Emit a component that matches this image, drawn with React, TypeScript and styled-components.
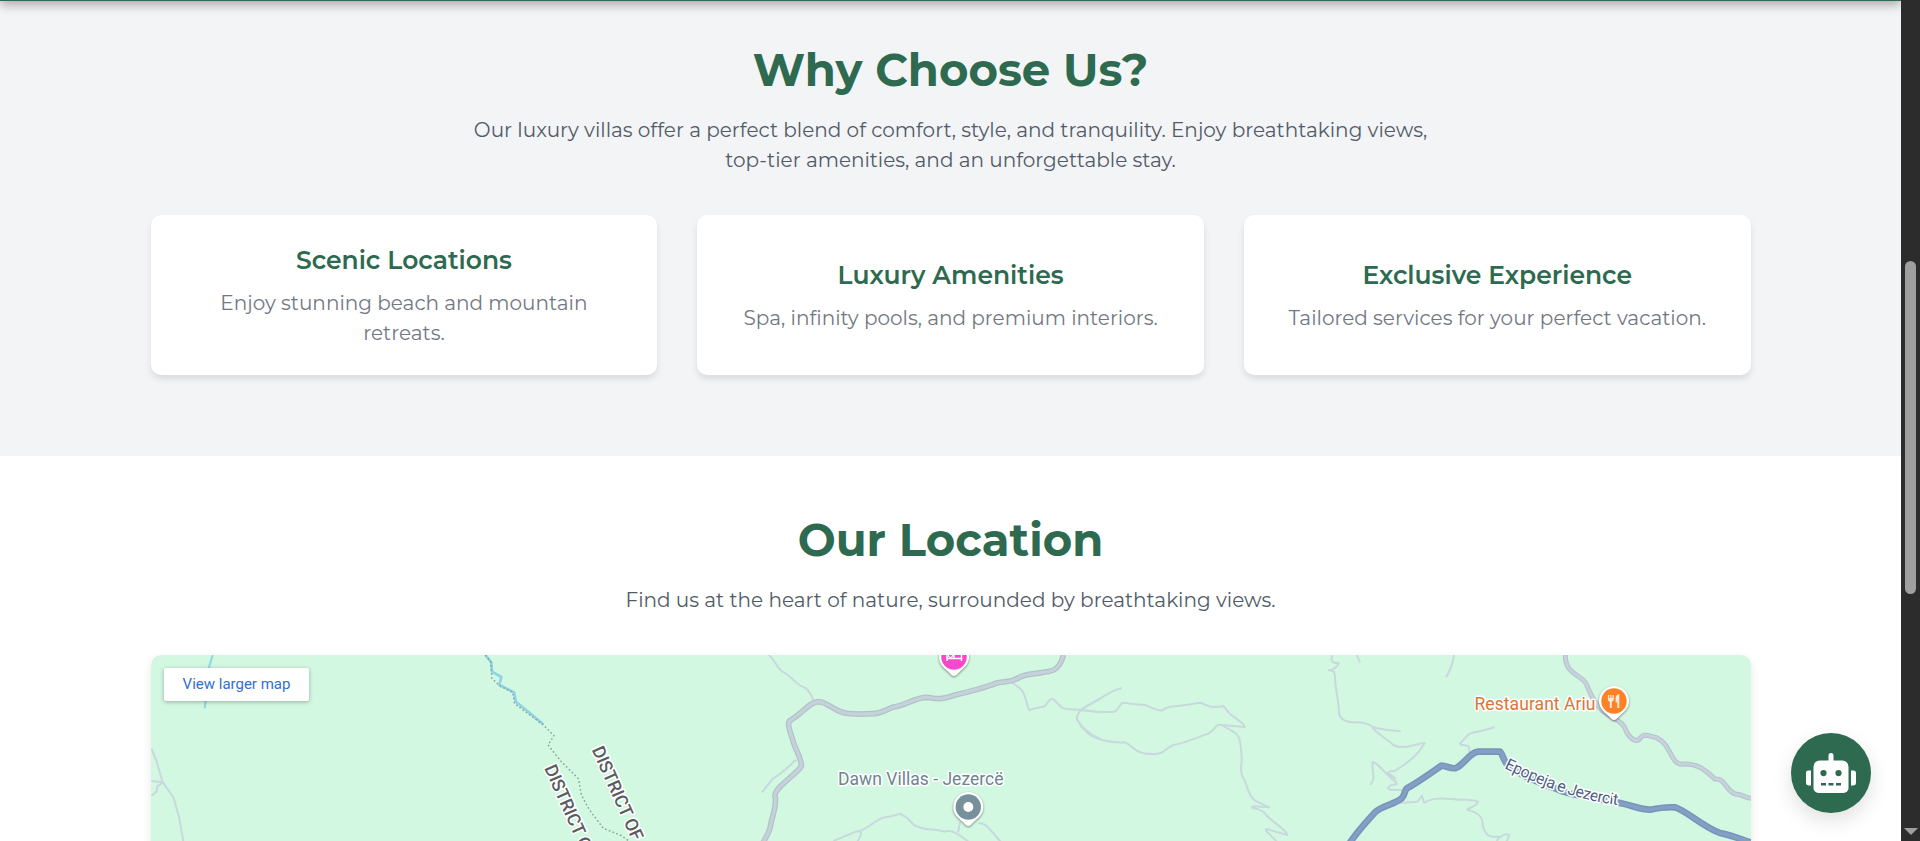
import React from 'react';
import styled, { createGlobalStyle } from 'styled-components';
import { FaRobot } from 'react-icons/fa';

const GlobalStyle = createGlobalStyle`
  *, *::before, *::after { box-sizing: border-box; }
  html, body { margin: 0; height: 841px; overflow: hidden; background: #fff; }
  body { font-family: Montserrat, "Open Sans", sans-serif; font-size: 20px; line-height: 30px; }
`;

const Window = styled.div`
  display: flex;
  height: 841px;
  overflow: hidden;
`;

const Viewport = styled.main`
  position: relative;
  display: flex;
  flex-direction: column;
  flex: 1;
  min-width: 0;
  overflow: hidden;
`;

const Header = styled.header`
  position: relative;
  z-index: 2;
  flex: none;
  height: 70px;
  margin-top: -69px;
  background: #2d6a4f;
  box-shadow: 0 4px 10px rgba(0, 0, 0, 0.3);
`;

const Section = styled.section<{ $tone: string; $top: number; $bottom: number }>`
  display: flex;
  flex-direction: column;
  align-items: center;
  flex: none;
  padding: ${(p) => p.$top}px 0 ${(p) => p.$bottom}px;
  background: ${(p) => p.$tone};
`;

const Title = styled.h2`
  margin: 0 0 12px;
  color: #2d6a4f;
  font-size: 45px;
  font-weight: 700;
  line-height: 67px;
`;

const Lead = styled.p`
  max-width: 1000px;
  margin: 0 0 40px;
  color: #515b68;
  text-align: center;
`;

const Cards = styled.div`
  display: grid;
  grid-template-columns: repeat(3, 1fr);
  gap: 40px;
  width: 1600px;
  margin-left: 0.2px;
`;

const Card = styled.article`
  display: flex;
  flex-direction: column;
  justify-content: center;
  height: 160px;
  padding: 0 30px;
  border-radius: 10px;
  background: #fff;
  box-shadow: 0 4px 6px rgba(0, 0, 0, 0.1);
  text-align: center;
`;

const CardTitle = styled.h3`
  margin: 0 0 9px;
  color: #2d6a4f;
  font-size: 25px;
  font-weight: 600;
  line-height: 37px;
`;

const CardText = styled.p`
  margin: 0;
  color: #727883;
`;

const MapShadow = styled.div`
  margin-left: 1px;
  border-radius: 10px;
  box-shadow: 0 4px 10px rgba(0, 0, 0, 0.1);
`;

const MapFrame = styled.div`
  position: relative;
  width: 1600px;
  height: 450px;
  border-radius: 10px;
  overflow: hidden;
  background: #d2f8e1;
`;

const MapDrawing = styled.svg`
  display: block;
  width: 1600px;
  height: 450px;
`;

const LargerMap = styled.a`
  position: absolute;
  top: 13px;
  left: 13px;
  display: flex;
  align-items: center;
  justify-content: center;
  width: 145px;
  height: 33px;
  border-radius: 2px;
  background: #fff;
  box-shadow: 0 1px 4px rgba(0, 0, 0, 0.3);
  color: #2f71d0;
  font: 400 15px/33px Roboto, sans-serif;
`;

const Place = styled.text<{ $ink: string; $weight?: number; $size?: number }>`
  fill: ${(p) => p.$ink};
  stroke: #fff;
  stroke-width: 3px;
  stroke-linejoin: round;
  paint-order: stroke;
  font-family: Roboto, sans-serif;
  font-size: ${(p) => p.$size ?? 17}px;
  font-weight: ${(p) => p.$weight ?? 400};
`;

const Trail = styled.path`
  fill: none;
  stroke: #c8d9dd;
  stroke-width: 6;
  stroke-linejoin: round;
`;

const Line = styled.path<{ $ink: string; $w: number; $dash?: string }>`
  fill: none;
  stroke: ${(p) => p.$ink};
  stroke-width: ${(p) => p.$w};
  stroke-dasharray: ${(p) => p.$dash ?? 'none'};
  stroke-linejoin: round;
`;

const PinShape = styled.path`
  fill: #fff;
  filter: drop-shadow(0 1px 1px rgba(0, 0, 0, 0.45));
`;

const ChatButton = styled.button`
  position: absolute;
  z-index: 3;
  right: 30px;
  bottom: 28px;
  display: flex;
  align-items: center;
  justify-content: center;
  width: 80px;
  height: 80px;
  padding: 0;
  border: 0;
  border-radius: 50%;
  background: #2d6a4f;
  color: #fff;
  box-shadow: 0 8px 20px rgba(0, 0, 0, 0.12);

  svg { width: 50px; height: 40px; }
`;

const ScrollTrack = styled.div`
  display: flex;
  flex-direction: column;
  align-items: center;
  justify-content: space-between;
  flex: none;
  width: 19px;
  padding: 261px 0 6px;
  background: #2c2c2c;
`;

const ScrollThumb = styled.div`
  width: 11px;
  height: 333px;
  border-radius: 6px;
  background: #9f9f9f;
`;

const ScrollArrow = styled.div`
  border: 7px solid transparent;
  border-top-color: #9f9f9f;
  border-bottom: 0;
`;

const highlights = [
  { title: 'Scenic Locations', text: 'Enjoy stunning beach and mountain retreats.' },
  { title: 'Luxury Amenities', text: 'Spa, infinity pools, and premium interiors.' },
  { title: 'Exclusive Experience', text: 'Tailored services for your perfect vacation.' },
];

const Road = ({ d, edge, fill, w }: { d: string; edge: string; fill: string; w: number }) => (
  <>
    <Line d={d} $ink={edge} $w={w} />
    <Line d={d} $ink={fill} $w={w * 0.55} />
  </>
);

const Pin = ({ x, y, color, children }: { x: number; y: number; color: string; children: React.ReactNode }) => (
  <g transform={`translate(${x} ${y})`}>
    <PinShape d="M0 -15C8.3 -15 15 -8.6 15 0C15 7 10.5 10.5 6 14.5L2.5 18Q0 20 -2.5 18L-6 14.5C-10.5 10.5 -15 7 -15 0C-15 -8.6 -8.3 -15 0 -15Z" />
    <circle r="12.7" fill={color} />
    {children}
  </g>
);

const LocationMap = () => (
  <MapDrawing viewBox="151 655 1600 450">
    <defs>
      <path id="epopeja" d="M1504 768C1530 781 1556 791 1578 797S1608 804 1650 809" />
    </defs>

    <g transform="translate(140 645) scale(.33333)">
      <Line d="M218 30L206 70L200 140L194 190" $ink="#93dbe3" $w={7} />
      <Line d="M1036 30L1054 52L1056 80L1084 96L1078 120L1122 142L1128 170L1210 238" $ink="#8ed3e6" $w={8} />
      <Line
        d="M1036 30L1052 50L1056 100L1078 122L1118 142L1124 176L1210 240L1242 272L1224 300L1262 348L1316 402L1324 450L1348 494L1390 550L1440 570L1470 590"
        $ink="#8aa39d"
        $w={4.5}
        $dash="5 7"
      />
      <Trail d="M34 310L50 350L68 412L100 456L118 520L130 590M34 408L68 412L52 424L50 440L34 452" />
    </g>

    <g transform="translate(640 645) scale(.33333)">
      <Trail d="M386 30C410 50 410 70 430 82C455 92 465 118 490 126C508 132 512 150 520 164M470 346L462 348C450 366 410 394 396 404L366 442" />
      <Trail d="M1118 116C1160 134 1152 160 1168 196C1190 184 1210 190 1216 182C1230 160 1236 158 1246 168C1265 190 1270 192 1290 193C1330 196 1350 194 1380 203M1380 162C1340 182 1312 194 1310 222C1320 240 1345 268 1380 282" />
      <Trail d="M580 588L648 560C662 556 668 562 660 575L652 590M660 558C690 545 710 524 730 518C756 514 766 512 780 506C805 518 808 524 820 538C850 560 890 550 912 560C935 554 948 562 985 590M954 562L960 532M1015 535C1040 530 1052 560 1082 590" />
      <Road
        d="M1270 30C1262 66 1244 80 1215 81C1186 88 1160 85 1136 98C1110 116 1085 106 1060 118C1015 134 980 142 945 150C900 165 895 162 862 157C825 157 800 180 760 186C730 198 725 205 700 206C650 209 620 208 602 200C575 190 555 170 535 170C505 172 490 205 448 228C440 240 455 270 460 292C470 322 485 340 484 364C468 390 405 426 405 452C412 490 396 510 392 540C390 560 378 575 370 592"
        edge="#b3c2ca"
        fill="#c5d2d9"
        w={17}
      />
    </g>

    <g transform="translate(1080 645) scale(.33333)">
      <Trail d="M126 130C100 130 60 165 0 194C30 198 50 204 104 200C120 194 115 172 134 173C150 178 180 178 195 180C220 190 235 200 248 196C265 180 280 186 300 182L362 173C385 186 400 190 430 183C445 200 450 210 465 218C485 232 495 240 494 246L426 240L414 240C400 250 400 258 385 266C340 282 310 295 280 300C250 315 250 328 220 327C160 328 160 300 135 292C90 294 80 288 60 283C20 270 20 258 0 240" />
      <Trail d="M426 240C450 258 475 260 480 288C484 320 486 330 485 350C480 380 485 395 494 405C505 440 512 460 530 470L568 487L520 484C505 490 540 490 552 502C570 528 622 555 622 570L560 552C550 556 575 570 590 590" />
      <Trail d="M758 30C748 48 760 56 776 54C772 66 764 74 746 76C760 76 766 80 765 100C765 130 775 150 778 210C785 226 805 233 825 232C855 232 868 238 880 246C910 256 930 256 962 259M876 246C885 262 920 280 940 300C970 316 1005 296 1034 294C1020 320 990 350 950 374C940 382 925 376 924 384L946 400C925 404 955 410 950 418C920 420 920 434 935 434L975 436M870 420C890 400 874 380 878 350C895 354 912 386 950 412" />
      <Trail d="M830 30L840 52M1122 30C1118 60 1110 75 1098 97M1243 246C1210 260 1185 258 1166 268L1140 296C1142 304 1158 296 1168 306L1168 325M960 474L1012 470L1026 452L1032 474C1060 455 1090 462 1118 462C1150 468 1170 460 1194 470C1190 485 1160 490 1162 494C1185 500 1210 510 1208 540C1215 570 1225 578 1260 575" />
    </g>

    <g transform="translate(1440 645) scale(.33333)">
      <Road
        d="M376 30C374 90 430 90 440 120C460 165 465 175 490 200C520 225 550 225 560 262C570 280 590 295 600 280C612 262 630 275 650 278C695 300 690 355 725 358C770 350 800 380 825 402C860 400 855 440 890 448C910 448 915 462 940 460"
        edge="#b6c3ce"
        fill="#c7d2dc"
        w={15}
      />
      <Trail d="M170 588C180 570 200 565 208 570L200 590" />
      <Road
        d="M-275 600C-245 555 -215 525 -195 502C-175 482 -140 480 -115 460C-100 445 -110 430 -92 426C-60 408 -15 375 5 362C20 362 35 375 50 368C75 355 90 322 115 320L180 320C190 330 188 345 205 362C260 405 320 418 370 440C420 455 470 460 540 474C580 482 600 494 630 494C660 488 690 486 705 487C745 500 780 540 840 564C880 572 900 582 940 595"
        edge="#7894bc"
        fill="#839fc3"
        w={20}
      />
    </g>

    <Place $ink="#5b5b61" $weight={500} $size={18} textLength={101} transform="translate(591.5 749.5) rotate(66)">
      DISTRICT OF
    </Place>
    <Place $ink="#5b5b61" $weight={500} $size={18} textLength={101} transform="translate(544 768) rotate(66)">
      DISTRICT OF
    </Place>
    <Place $ink="#6f8390" $size={17.5} x={838} y={785} textLength={165.5}>
      Dawn Villas - Jezercë
    </Place>
    <Place $ink="#dd7433" $size={17.5} x={1474.5} y={710} textLength={121}>
      Restaurant Ariu
    </Place>
    <Place $ink="#4f5f80" $size={16}>
      <textPath href="#epopeja" textLength={120}>
        Epopeja e Jezercit
      </textPath>
    </Place>

    <Pin x={954} y={657} color="#f548cb">
      <path d="M-7 -6V4M-7 1.5H7.5M7.5 4V-1Q7.5 -4 4.5 -4H0V1.5" fill="none" stroke="#fff" strokeWidth="1.5" />
      <circle cx="-3.5" cy="-1.5" r="2" fill="none" stroke="#fff" strokeWidth="1.2" />
    </Pin>
    <Pin x={968.3} y={807} color="#78909c">
      <circle r="5" fill="#fff" />
    </Pin>
    <Pin x={1614} y={701} color="#ff8126">
      <path d="M-5.5 -6V-2.5M-3.2 -6V-2.5M-.9 -6V-2.5" stroke="#ffe9d8" strokeWidth="1.2" />
      <path d="M-6.1 -3H-.3V-1.5Q-.5 .5 -2.2 .7V7H-4.2V.7Q-6 .5 -6.1 -1.5ZM5.3 -7V7H3.3V1.5H1.6V-3Q2 -6.5 5.3 -7Z" fill="#ffe9d8" />
    </Pin>
  </MapDrawing>
);

export default function App() {
  return (
    <Window>
      <GlobalStyle />
      <Viewport>
        <Header />
        <Section $tone="#f3f4f6" $top={35} $bottom={81}>
          <Title>Why Choose Us?</Title>
          <Lead>
            Our luxury villas offer a perfect blend of comfort, style, and tranquility. Enjoy breathtaking views,
            top-tier amenities, and an unforgettable stay.
          </Lead>
          <Cards>
            {highlights.map((item) => (
              <Card key={item.title}>
                <CardTitle>{item.title}</CardTitle>
                <CardText>{item.text}</CardText>
              </Card>
            ))}
          </Cards>
        </Section>
        <Section $tone="#fff" $top={50} $bottom={80}>
          <Title>Our Location</Title>
          <Lead>Find us at the heart of nature, surrounded by breathtaking views.</Lead>
          <MapShadow>
            <MapFrame>
              <LocationMap />
              <LargerMap>View larger map</LargerMap>
            </MapFrame>
          </MapShadow>
        </Section>
        <ChatButton aria-label="Open chat">
          <FaRobot />
        </ChatButton>
      </Viewport>
      <ScrollTrack>
        <ScrollThumb />
        <ScrollArrow />
      </ScrollTrack>
    </Window>
  );
}
